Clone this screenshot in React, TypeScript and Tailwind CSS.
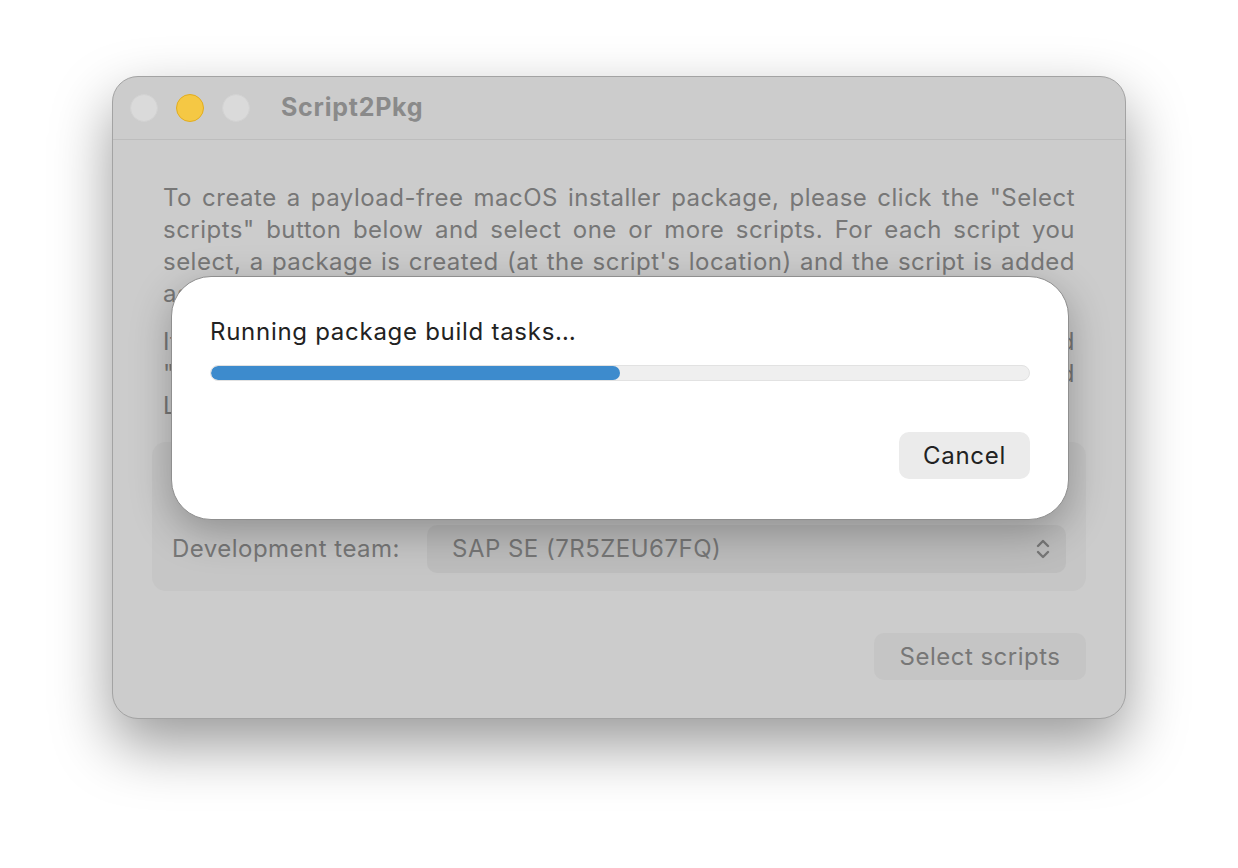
import React from "react";

const font = { fontFamily: "Inter, 'Noto Sans', 'Liberation Sans', sans-serif" };

// lines are laid out one by one so the wrapping matches the original window
const introLines = [
  'To create a payload-free macOS installer package, please click the "Select',
  'scripts" button below and select one or more scripts. For each script you',
  "select, a package is created (at the script's location) and the script is added",
];

const signLines = [
  "If you want to sign the created packages, please check the box below and",
  '"Sign packages" and the matching Developer ID Installer certificate is used',
];

function JustifiedLine({ text }: { text: string }) {
  return <div className="text-justify [text-align-last:justify] whitespace-nowrap">{text}</div>;
}

function TrafficLights() {
  return (
    <div className="flex items-center gap-[18px]">
      <span className="w-[28px] h-[28px] rounded-full bg-[#dadada] border border-[#d2d2d2]" />
      <span className="w-[28px] h-[28px] rounded-full bg-[#f5c844] border border-[#e2ad1f]" />
      <span className="w-[28px] h-[28px] rounded-full bg-[#dadada] border border-[#d2d2d2]" />
    </div>
  );
}

function ProgressSheet({ progress }: { progress: number }) {
  return (
    <div className="absolute left-[58px] top-[199px] w-[898px] h-[244px] bg-white rounded-[40px] border border-[#8f8f8f] shadow-[0_12px_40px_rgba(0,0,0,0.28)] pt-[41px] px-[38px] pb-[40px] flex flex-col">
      <div className="text-[24px] leading-[28px] tracking-[0.03em] text-[#222222]">Running package build tasks…</div>
      <div className="mt-[19px] h-[16px] rounded-full bg-[#efefef] border border-[#e2e2e2] overflow-hidden">
        <div className="h-full rounded-full bg-[#3d8bcd]" style={{ width: `${progress}%` }} />
      </div>
      <div className="mt-auto flex justify-end">
        <button className="h-[47px] w-[131px] rounded-[10px] bg-[#ebebeb] text-[24px] tracking-[0.03em] text-[#222222]">Cancel</button>
      </div>
    </div>
  );
}

export default function App() {
  return (
    <div className="w-[1238px] h-[868px] bg-white flex justify-center pt-[76px]" style={font}>
      <div className="relative w-[1014px] h-[643px] rounded-[26px] bg-[#cccccc] border border-[#a3a3a3] shadow-[0_26px_60px_rgba(0,0,0,0.4)] flex flex-col">
        {/* title bar */}
        <div className="h-[63px] shrink-0 flex items-center pl-[17px] border-b border-[#bdbdbd]">
          <TrafficLights />
          <div className="ml-[31px] text-[25px] font-bold tracking-[0.03em] text-[#8a8a8a]">Script2Pkg</div>
        </div>

        {/* content */}
        <div className="flex-1 flex flex-col px-[39px] pt-[42px] pb-[38px]">
          <div className="px-[11px] text-[24px] leading-[32px] tracking-[0.02em] text-[#777777]">
            {introLines.map((l) => (
              <JustifiedLine key={l} text={l} />
            ))}
            <div>as postinstall script to the package.</div>
            <div className="mt-[16px]">
              {signLines.map((l) => (
                <JustifiedLine key={l} text={l} />
              ))}
              <div>Login keychain.</div>
            </div>
          </div>

          <div className="mt-[20px] rounded-[14px] bg-[#c6c6c6] px-[20px] pt-[16px] pb-[18px] flex flex-col gap-[19px]">
            <div className="h-[48px] flex items-center gap-3 text-[24px] tracking-[0.02em] text-[#777777]">
              <span className="w-[20px] h-[20px] rounded-[5px] bg-[#bcbcbc]" />
              Sign packages
            </div>
            <div className="h-[48px] flex items-center text-[24px] tracking-[0.02em] text-[#777777]">
              <div className="w-[255px]">Development team:</div>
              <div className="flex-1 h-[48px] rounded-[10px] bg-[#bdbdbd] flex items-center justify-between pl-[25px] pr-[16px]">
                <span>SAP SE (7R5ZEU67FQ)</span>
                <svg width="14" height="22" viewBox="0 0 14 22" fill="none" stroke="#777777" strokeWidth="2.4" strokeLinecap="round" strokeLinejoin="round">
                  <path d="M2 8 L7 3 L12 8" />
                  <path d="M2 14 L7 19 L12 14" />
                </svg>
              </div>
            </div>
          </div>

          <div className="mt-auto flex justify-end">
            <button className="h-[47px] w-[212px] rounded-[10px] bg-[#c5c5c5] text-[24px] tracking-[0.02em] text-[#777777]">Select scripts</button>
          </div>
        </div>

        <ProgressSheet progress={50} />
      </div>
    </div>
  );
}
